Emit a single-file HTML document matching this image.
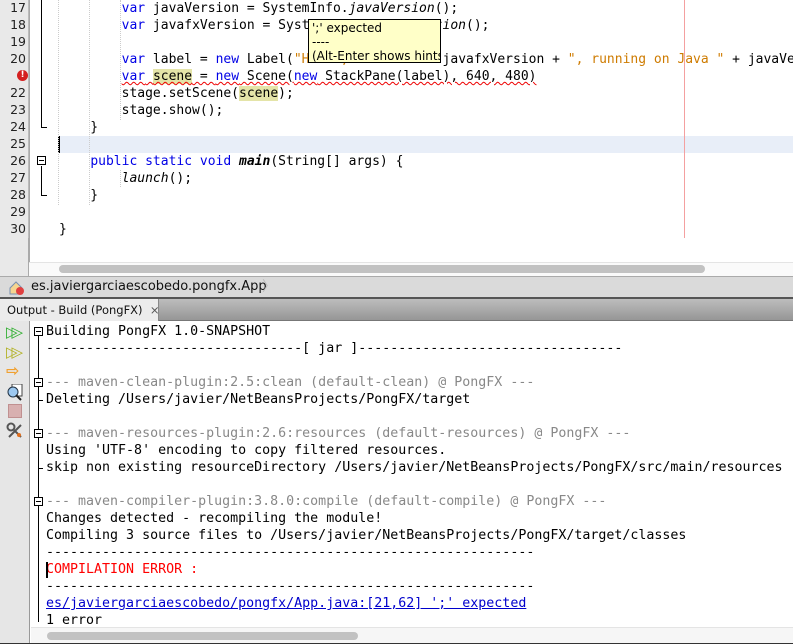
<!DOCTYPE html>
<html><head><meta charset="utf-8"><style>
*{margin:0;padding:0;box-sizing:border-box}
html,body{width:793px;height:644px;overflow:hidden}
body{background:#fff;position:relative;font-family:"DejaVu Sans Mono","Liberation Mono",monospace}
.a{position:absolute;white-space:pre}
.ln{position:absolute;left:0;width:26px;text-align:right;font-size:12.5px;color:#222;font-family:"DejaVu Sans",sans-serif}
.c{position:absolute;left:59px;font-size:13px;white-space:pre;color:#000;line-height:17px}
.k{color:#0000e6}.s{color:#ce7b00}.i{font-style:italic}
.hl{background:#e4e4a8}
.o{position:absolute;left:46px;font-size:13.3px;white-space:pre;line-height:17px;color:#000}
.g{color:#888}
.fb{position:absolute;width:9px;height:9px;border:1px solid #000;background:#fff}
.fb:after{content:"";position:absolute;left:1px;top:3px;width:5px;height:1px;background:#000}
.clip{position:absolute;left:0;top:0;width:793px;height:644px;overflow:hidden}
</style></head><body><div class="clip">
<div class="a" style="left:0;top:0;width:29px;height:262px;background:#e9e9e9;border-right:1px solid #bbb"></div>
<div class="a" style="left:29px;top:0;width:1px;height:262px;background:#aaa"></div>
<div class="a" style="left:59px;top:136px;width:734px;height:17px;background:#e8eef8"></div>
<div class="a" style="left:58px;top:136px;width:2px;height:17px;background:#000"></div>
<div class="a" style="left:684px;top:0;width:1px;height:238px;background:#f4a0a0"></div>
<div class="a" style="left:58px;top:0;width:0;height:205px;border-left:1px dotted #ccc"></div>
<div class="a" style="left:89px;top:0;width:0;height:205px;border-left:1px dotted #ccc"></div>
<div class="a" style="left:120px;top:0;width:0;height:120px;border-left:1px dotted #ccc"></div>
<div class="a" style="left:120px;top:170px;width:0;height:17px;border-left:1px dotted #ccc"></div>
<div class="a" style="left:41px;top:0;width:1px;height:128px;background:#000"></div>
<div class="a" style="left:41px;top:127px;width:6px;height:1px;background:#000"></div>
<div class="fb" style="left:37px;top:156px"></div>
<div class="a" style="left:41px;top:166px;width:1px;height:29px;background:#000"></div>
<div class="a" style="left:41px;top:195px;width:6px;height:1px;background:#000"></div>

<div class="ln" style="top:0">17</div>
<div class="ln" style="top:17px">18</div>
<div class="ln" style="top:34px">19</div>
<div class="ln" style="top:51px">20</div>
<div class="a" style="left:17px;top:70px;width:11px;height:11px;border-radius:50%;background:#d42020;color:#fff;font:bold 9px/11px 'DejaVu Sans';text-align:center">!</div>
<div class="ln" style="top:85px">22</div>
<div class="ln" style="top:102px">23</div>
<div class="ln" style="top:119px">24</div>
<div class="ln" style="top:136px">25</div>
<div class="ln" style="top:153px">26</div>
<div class="ln" style="top:170px">27</div>
<div class="ln" style="top:187px">28</div>
<div class="ln" style="top:204px">29</div>
<div class="ln" style="top:221px">30</div>

<div class="c" style="top:0">        <span class="k">var</span> javaVersion = SystemInfo.<span class="i">javaVersion</span>();</div>
<div class="c" style="top:17px">        <span class="k">var</span> javafxVersion = SystemInfo.<span class="i">javafxVersion</span>();</div>
<div class="c" style="top:51px">        <span class="k">var</span> label = <span class="k">new</span> Label(<span class="s">"Hello, JavaFX "</span> + javafxVersion + <span class="s">", running on Java "</span> + javaVersion + <span class="s">"."</span>);</div>
<div class="c" style="top:68px">        <span style="text-decoration:underline wavy #e00;text-decoration-thickness:1px"><span class="k">var</span> <span class="hl">scene</span> = <span class="k">new</span> Scene(<span class="k">new</span> StackPane(label), 640, 480)</span></div>
<div class="c" style="top:85px">        stage.setScene(<span class="hl">scene</span>);</div>
<div class="c" style="top:102px">        stage.show();</div>
<div class="c" style="top:119px">    }</div>
<div class="c" style="top:153px">    <span class="k">public static void</span> <b><i>main</i></b>(String[] args) {</div>
<div class="c" style="top:170px">        <span class="i">launch</span>();</div>
<div class="c" style="top:187px">    }</div>
<div class="c" style="top:221px">}</div>

<div class="a" style="left:308px;top:19px;width:133px;height:44px;background:#ffffc8;border:1px solid #000;font:12px/14px 'DejaVu Sans',sans-serif;padding:1px 0 0 3px;overflow:hidden">';' expected<br>----<br>(Alt-Enter shows hints)</div>

<div class="a" style="left:0;top:262px;width:793px;height:15px;background:#fafafa;border-top:1px solid #e4e4e4"></div>
<div class="a" style="left:0;top:238px;width:29px;height:38px;background:#e9e9e9;border-right:1px solid #aaa"></div>
<div class="a" style="left:59px;top:265px;width:646px;height:8px;border-radius:4px;background:#c2c2c2"></div>
<div class="a" style="left:0;top:276px;width:793px;height:21px;background:#dadada;border-top:1px solid #aaa"></div>
<svg class="a" style="left:9px;top:280px" width="16" height="16"><path d="M1 8 L7 2 L13 8 L13 14 L1 14Z" fill="#f5d590" stroke="#7890b0"/><circle cx="11" cy="11" r="4" fill="#e04040"/></svg>
<div class="a" style="left:31px;top:278px;font:13px/18px 'DejaVu Sans',sans-serif;color:#111">es.javiergarciaescobedo.pongfx.App</div>
<div class="a" style="left:262px;top:278px;font:14px/18px 'DejaVu Sans',sans-serif;color:#bbb">〉</div>
<div class="a" style="left:0;top:297px;width:793px;height:2px;background:#555"></div>
<div class="a" style="left:0;top:299px;width:793px;height:22px;background:linear-gradient(#bdbdbd,#969696);border-bottom:1px solid #777"></div>
<div class="a" style="left:0;top:299px;width:159px;height:22px;background:#ececec;border-right:1px solid #888;font:11.5px/22px 'DejaVu Sans',sans-serif;padding-left:7px;color:#111">Output - Build (PongFX) &nbsp;<span style="color:#555">×</span></div>
<div class="a" style="left:0;top:321px;width:30px;height:323px;background:#e6e6e6;border-right:1px solid #999"></div>
<div class="a" style="left:6px;top:323px;color:#2cae2c;font:bold 15px 'DejaVu Sans';letter-spacing:-6px">▷▷</div>
<div class="a" style="left:6px;top:343px;color:#b0b020;font:bold 15px 'DejaVu Sans';letter-spacing:-6px">▷▷</div>
<div class="a" style="left:6px;top:361px;color:#f0a030;font:bold 16px 'DejaVu Sans'">⇨</div>
<svg class="a" style="left:6px;top:384px" width="18" height="18"><rect x="6" y="0" width="10" height="12" fill="#fff" stroke="#444"/><circle cx="7" cy="8" r="5" fill="#9cc8f0" stroke="#234"/><path d="M10 11 L15 16" stroke="#222" stroke-width="2"/></svg>
<div class="a" style="left:8px;top:404px;width:14px;height:14px;background:#d8b0b0;border:1px solid #c09090"></div>
<svg class="a" style="left:6px;top:422px" width="18" height="18"><circle cx="5" cy="5" r="3.5" fill="none" stroke="#555" stroke-width="2"/><path d="M8 8 L15 15 M3 15 L15 3" stroke="#555" stroke-width="2"/><circle cx="13" cy="13" r="2" fill="#e07020"/></svg>

<div class="a" style="left:38px;top:332px;width:1px;height:290px;background:#000"></div>
<div class="fb" style="left:34px;top:327px"></div>
<div class="fb" style="left:34px;top:378px"></div>
<div class="fb" style="left:34px;top:429px"></div>
<div class="fb" style="left:34px;top:497px"></div>
<div class="a" style="left:38px;top:400px;width:5px;height:1px;background:#000"></div>
<div class="a" style="left:38px;top:468px;width:5px;height:1px;background:#000"></div>

<div class="o" style="top:323px">Building PongFX 1.0-SNAPSHOT</div>
<div class="o" style="top:340px">--------------------------------[ jar ]---------------------------------</div>
<div class="o g" style="top:374px">--- maven-clean-plugin:2.5:clean (default-clean) @ PongFX ---</div>
<div class="o" style="top:391px">Deleting /Users/javier/NetBeansProjects/PongFX/target</div>
<div class="o g" style="top:425px">--- maven-resources-plugin:2.6:resources (default-resources) @ PongFX ---</div>
<div class="o" style="top:442px">Using 'UTF-8' encoding to copy filtered resources.</div>
<div class="o" style="top:459px">skip non existing resourceDirectory /Users/javier/NetBeansProjects/PongFX/src/main/resources</div>
<div class="o g" style="top:493px">--- maven-compiler-plugin:3.8.0:compile (default-compile) @ PongFX ---</div>
<div class="o" style="top:510px">Changes detected - recompiling the module!</div>
<div class="o" style="top:527px">Compiling 3 source files to /Users/javier/NetBeansProjects/PongFX/target/classes</div>
<div class="o" style="top:544px">-------------------------------------------------------------</div>
<div class="o" style="top:561px;color:#f00">COMPILATION ERROR :</div>
<div class="a" style="left:46px;top:562px;width:2px;height:16px;background:#000"></div>
<div class="o" style="top:578px">-------------------------------------------------------------</div>
<div class="o" style="top:595px;color:#0000cc;text-decoration:underline">es/javiergarciaescobedo/pongfx/App.java:[21,62] ';' expected</div>
<div class="o" style="top:612px">1 error</div>
<div class="a" style="left:31px;top:627px;width:762px;height:16px;background:#f6f6f6;border-top:1px solid #e4e4e4"></div>
<div class="a" style="left:47px;top:632px;width:311px;height:8px;border-radius:4px;background:#c2c2c2"></div>
<div class="a" style="left:0;top:643px;width:793px;height:1px;background:#333"></div>
</div></body></html>
